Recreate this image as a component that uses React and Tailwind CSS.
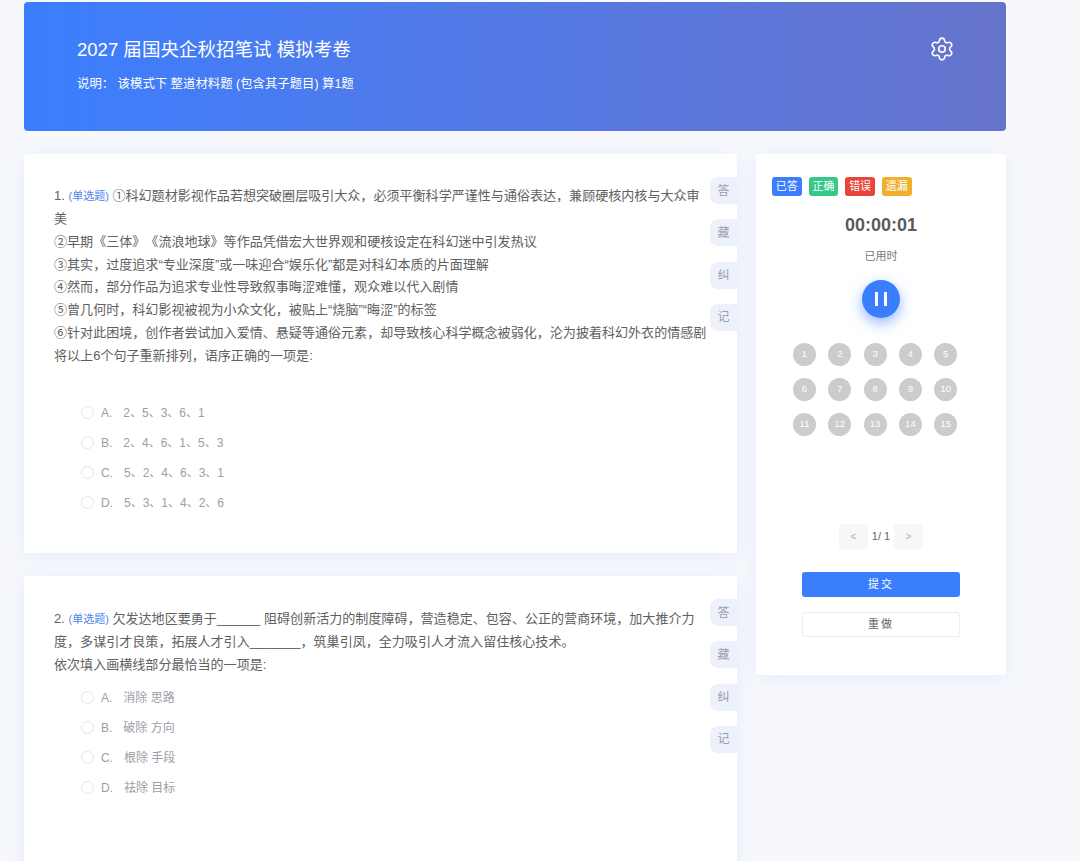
import React from "react";
import { Settings } from "lucide-react";

const FONT = "font-['Liberation_Sans','Noto_Sans_CJK_SC',sans-serif]";

const QUESTIONS = [
  {
    no: "1.",
    lines: [
      "①科幻题材影视作品若想突破圈层吸引大众，必须平衡科学严谨性与通俗表达，兼顾硬核内核与大众审美",
      "②早期《三体》《流浪地球》等作品凭借宏大世界观和硬核设定在科幻迷中引发热议",
      "③其实，过度追求“专业深度”或一味迎合“娱乐化”都是对科幻本质的片面理解",
      "④然而，部分作品为追求专业性导致叙事晦涩难懂，观众难以代入剧情",
      "⑤曾几何时，科幻影视被视为小众文化，被贴上“烧脑”“晦涩”的标签",
      "⑥针对此困境，创作者尝试加入爱情、悬疑等通俗元素，却导致核心科学概念被弱化，沦为披着科幻外衣的情感剧",
      "将以上6个句子重新排列，语序正确的一项是:",
    ],
    options: [
      ["A.", "2、5、3、6、1"],
      ["B.", "2、4、6、1、5、3"],
      ["C.", "5、2、4、6、3、1"],
      ["D.", "5、3、1、4、2、6"],
    ],
  },
  {
    no: "2.",
    lines: [
      "欠发达地区要勇于______ 阻碍创新活力的制度障碍，营造稳定、包容、公正的营商环境，加大推介力度，多谋引才良策，拓展人才引入_______，筑巢引凤，全力吸引人才流入留住核心技术。",
      "依次填入画横线部分最恰当的一项是:",
    ],
    options: [
      ["A.", "消除 思路"],
      ["B.", "破除 方向"],
      ["C.", "根除 手段"],
      ["D.", "祛除 目标"],
    ],
  },
];

function SideTabs({ className = "" }) {
  return (
    <div className={`absolute right-0 flex flex-col gap-[15.3px] ${className}`}>
      {["答", "藏", "纠", "记"].map((t) => (
        <div
          key={t}
          className="w-[27px] h-[27px] flex items-center justify-center bg-[#edf1fb] rounded-l-[8px] text-[12px] text-[#9a9ea8]"
        >
          {t}
        </div>
      ))}
    </div>
  );
}

function Question({ q, className, optionsClass, tabsClass }) {
  return (
    <div className={`relative bg-white rounded-[3px] shadow-[0_3px_18px_rgba(64,110,230,0.09)] pl-[30px] pr-[30px] ${className}`}>
      <SideTabs className={tabsClass} />
      <div className="text-[13.05px] leading-[22.85px] text-[#606060] [text-spacing-trim:space-all]">
        <div className={q.no === "1." ? "w-[650px]" : "w-[645px]"}>
          {q.no} <span className="text-[11px] text-[#4c86e8]">(单选题)</span> {q.lines[0]}
        </div>
        {q.lines.slice(1).map((l) => (
          <div key={l} className="w-[660px]">{l}</div>
        ))}
      </div>
      <div className={`flex flex-col gap-[10px] pl-[27px] ${optionsClass}`}>
        {q.options.map(([k, v]) => (
          <div key={k} className="flex items-center h-[20px] text-[12px] text-[#9b9ea6]">
            <span className="w-[13px] h-[13px] rounded-full border border-[#e3e5e8] mr-[7px]" />
            <span className="mr-[11px]">{k}</span>
            <span>{v}</span>
          </div>
        ))}
      </div>
    </div>
  );
}

function Badge({ color, children }) {
  return (
    <span className={`w-[29.5px] h-[19px] flex items-center justify-center rounded-[3px] text-[11px] text-white ${color}`}>
      {children}
    </span>
  );
}

export default function App() {
  return (
    <div className={`${FONT} bg-[#f6f8fc] h-[861px] overflow-hidden pt-[2px] pl-[24px]`}>
      <div className="w-[982px]">
        <div className="h-[129px] rounded-[4px] bg-gradient-to-r from-[#3a7efe] to-[#6673cc] pl-[53px] pr-[51px] pt-[34px] flex justify-between items-start text-white">
          <div>
            <div className="text-[18.55px] leading-[28px]">2027 届国央企秋招笔试 模拟考卷</div>
            <div className="text-[12.4px] leading-[18px] mt-[11px]">
              说明： 该模式下 整道材料题 (包含其子题目) 算1题
            </div>
          </div>
          <Settings size={26} strokeWidth={1.5} />
        </div>

        <div className="flex items-start gap-[19px] mt-[23px]">
          <div className="w-[713px] flex flex-col gap-[23px]">
            <Question q={QUESTIONS[0]} className="h-[399px] pt-[31px]" optionsClass="mt-[35px]" tabsClass="top-[23px]" />
            <Question q={QUESTIONS[1]} className="h-[320px] pt-[32px]" optionsClass="mt-[11px]" tabsClass="top-[23px]" />
          </div>

          <div className="w-[250px] h-[521px] bg-white rounded-[3px] shadow-[0_3px_18px_rgba(64,110,230,0.09)] flex flex-col items-center pt-[23px]">
            <div className="self-start flex gap-[7.2px] pl-[16px]">
              <Badge color="bg-[#3a7efe]">已答</Badge>
              <Badge color="bg-[#35c88a]">正确</Badge>
              <Badge color="bg-[#e8453c]">错误</Badge>
              <Badge color="bg-[#efb02b]">遗漏</Badge>
            </div>
            <div className="text-[18px] leading-[24px] font-bold text-[#5a5a5a] mt-[17px]">00:00:01</div>
            <div className="text-[11px] leading-[16px] text-[#777] mt-[11px]">已用时</div>
            <div className="w-[38px] h-[38px] rounded-full bg-[#3a7efe] flex items-center justify-center mt-[16px] shadow-[0_5px_14px_rgba(58,126,254,0.55)]">
              <svg width="14" height="14" viewBox="0 0 14 14" fill="#fff">
                <rect x="1" y="0" width="3" height="14" rx="0.5" />
                <rect x="10" y="0" width="3" height="14" rx="0.5" />
              </svg>
            </div>
            <div className="self-start grid grid-cols-5 gap-x-[12.3px] gap-y-[12px] mt-[25px] ml-[37px]">
              {Array.from({ length: 15 }, (_, i) => (
                <div key={i} className="w-[23px] h-[23px] rounded-full bg-[#cccccc] flex items-center justify-center text-[9.5px] text-white">
                  {i + 1}
                </div>
              ))}
            </div>
            <div className="flex items-center mt-[88px]">
              <div className="w-[29px] h-[25px] bg-[#f7f7f7] rounded-[2px] flex items-center justify-center text-[10px] text-[#aaa]">&lt;</div>
              <div className="w-[26px] text-center text-[11px] text-[#666]">1/ 1</div>
              <div className="w-[29px] h-[25px] bg-[#f7f7f7] rounded-[2px] flex items-center justify-center text-[10px] text-[#aaa]">&gt;</div>
            </div>
            <div className="w-[158px] h-[25px] mt-[23px] rounded-[3px] bg-[#3a7efe] text-white text-[11px] tracking-[2px] flex items-center justify-center">提交</div>
            <div className="w-[158px] h-[25px] mt-[15px] rounded-[3px] border border-[#ececec] text-[#666] text-[11px] tracking-[2px] flex items-center justify-center">重做</div>
          </div>
        </div>
      </div>
    </div>
  );
}
